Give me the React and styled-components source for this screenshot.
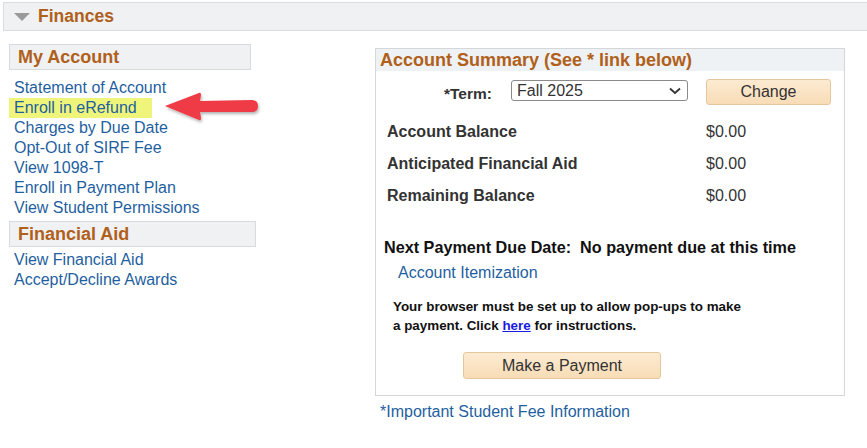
import React from "react";
import styled, { createGlobalStyle } from "styled-components";

const GlobalStyle = createGlobalStyle`
  body {
    margin: 0;
    background: #ffffff;
    font-family: "Liberation Sans", Arial, sans-serif;
  }
`;

const Page = styled.div`
  width: 867px;
  height: 448px;
  overflow: hidden;
  position: relative;
`;

const TopBar = styled.div`
  margin: 2px 0 0 3px;
  height: 27px;
  border: 1px solid #dadde0;
  border-right: none;
  background: #eff1f3;
  display: flex;
  align-items: center;
  gap: 8px;
  padding-left: 10px;
`;

const Triangle = styled.div`
  width: 0;
  height: 0;
  border-left: 8px solid transparent;
  border-right: 8px solid transparent;
  border-top: 8px solid #9a9a9a;
  margin-top: 1px;
`;

const BrownTitle = styled.span`
  color: #b0601a;
  font-weight: bold;
  font-size: ${(p) => p.size || 18}px;
`;

const Content = styled.div`
  display: flex;
  padding-left: 9px;
  margin-top: 13px;
`;

const LeftCol = styled.div`
  width: 247px;
  position: relative;
`;

const SectionHeader = styled.div`
  height: 26px;
  width: ${(p) => p.width}px;
  box-sizing: border-box;
  border: 1px solid #d8dbde;
  background: #eff1f3;
  display: flex;
  align-items: center;
  padding-left: 8px;
  margin-bottom: ${(p) => p.mb || 8}px;
`;

const LinkList = styled.div`
  display: flex;
  flex-direction: column;
  padding-left: 5px;
  margin-bottom: ${(p) => p.mb || 0}px;
`;

const NavLink = styled.a`
  font-size: 16px;
  line-height: 20px;
  color: #1f5f9f;
  text-decoration: none;
  width: max-content;
  background: ${(p) => (p.highlight ? "#eef57a" : "transparent")};
  margin-left: ${(p) => (p.highlight ? "-5px" : "0")};
  padding-left: ${(p) => (p.highlight ? "5px" : "0")};
  padding-right: ${(p) => (p.highlight ? "15px" : "0")};
`;

const Arrow = styled.svg`
  position: absolute;
  left: 154px;
  top: 46px;
`;

const RightCol = styled.div`
  margin-left: 119px;
  margin-top: 4px;
  width: 470px;
`;

const Panel = styled.div`
  border: 1px solid #d4d7da;
  height: 348px;
  box-sizing: border-box;
`;

const PanelHeader = styled.div`
  background: #eff2f4;
  height: 22px;
  display: flex;
  align-items: center;
  padding-left: 4px;
`;

const TermRow = styled.div`
  display: flex;
  align-items: center;
  margin-top: 7px;
  height: 27px;
`;

const TermLabel = styled.span`
  font-weight: bold;
  font-size: 15.5px;
  color: #333;
  margin-left: 68px;
  margin-top: 5px;
  width: 67px;
`;

const Select = styled.div`
  width: 177px;
  height: 21px;
  box-sizing: border-box;
  border: 1px solid #8a8a8a;
  border-radius: 3px;
  display: flex;
  align-items: center;
  justify-content: space-between;
  padding: 0 6px 0 5px;
  font-size: 16px;
  color: #333;
  margin-top: -2px;
`;

const Button = styled.div`
  width: ${(p) => p.width}px;
  height: ${(p) => p.height}px;
  box-sizing: border-box;
  border: 1px solid #e6c79c;
  border-radius: 3px;
  background: linear-gradient(#fcebd2, #f8dcb6);
  color: #333;
  font-size: 16px;
  display: flex;
  align-items: center;
  justify-content: center;
  margin-left: ${(p) => p.ml || 0}px;
`;

const BalanceTable = styled.div`
  display: grid;
  grid-template-columns: 319px auto;
  padding-left: 11px;
  margin-top: 16px;
`;

const BalanceLabel = styled.div`
  font-weight: bold;
  font-size: 16px;
  color: #333;
  height: 32px;
  line-height: 22px;
`;

const BalanceValue = styled.div`
  font-size: 16px;
  color: #333;
  height: 32px;
  line-height: 22px;
`;

const NextDue = styled.div`
  font-weight: bold;
  font-size: 16.2px;
  color: #111;
  padding-left: 8px;
  margin-top: 21px;
  white-space: pre;
`;

const ItemLink = styled.a`
  display: block;
  font-size: 16px;
  color: #1f5f9f;
  text-decoration: none;
  padding-left: 22px;
  margin-top: 7px;
`;

const Notice = styled.div`
  font-weight: bold;
  font-size: 13.4px;
  line-height: 19px;
  color: #111;
  padding-left: 17px;
  margin-top: 15px;
`;

const HereLink = styled.a`
  color: #1a1ae0;
  text-decoration: underline;
`;

const PayRow = styled.div`
  margin-top: 17px;
`;

const FeeLink = styled.a`
  display: block;
  font-size: 16px;
  color: #1f5f9f;
  text-decoration: none;
  padding-left: 5px;
  margin-top: 7px;
`;

const myAccountLinks = [
  "Statement of Account",
  "Enroll in eRefund",
  "Charges by Due Date",
  "Opt-Out of SIRF Fee",
  "View 1098-T",
  "Enroll in Payment Plan",
  "View Student Permissions",
];

const aidLinks = ["View Financial Aid", "Accept/Decline Awards"];

const balances = [
  ["Account Balance", "$0.00"],
  ["Anticipated Financial Aid", "$0.00"],
  ["Remaining Balance", "$0.00"],
];

const App = () => {
  return (
    <Page>
      <GlobalStyle />
      <TopBar>
        <Triangle />
        <BrownTitle size={17.5}>Finances</BrownTitle>
      </TopBar>
      <Content>
        <LeftCol>
          <SectionHeader width={242}>
            <BrownTitle>My Account</BrownTitle>
          </SectionHeader>
          <LinkList mb={3}>
            {myAccountLinks.map((l) => (
              <NavLink key={l} highlight={l === "Enroll in eRefund"}>
                {l}
              </NavLink>
            ))}
          </LinkList>
          <SectionHeader width={247} mb={3}>
            <BrownTitle>Financial Aid</BrownTitle>
          </SectionHeader>
          <LinkList>
            {aidLinks.map((l) => (
              <NavLink key={l}>{l}</NavLink>
            ))}
          </LinkList>
          <Arrow width="100" height="42" viewBox="0 0 100 42">
            <defs>
              <filter id="sh" x="-10%" y="-20%" width="130%" height="150%">
                <feDropShadow dx="1" dy="2" stdDeviation="1.5" floodColor="#000" floodOpacity="0.3" />
              </filter>
            </defs>
            <g filter="url(#sh)">
              <path
                d="M2 16 L36 3 Q38 2 38 5 L37 11 L89 10 Q95 10 95 16 Q95 22 89 22 L37 22 L38 28 Q38 31 36 30 Z"
                fill="#ee3b45"
              />
            </g>
          </Arrow>
        </LeftCol>
        <RightCol>
          <Panel>
            <PanelHeader>
              <BrownTitle>Account Summary (See * link below)</BrownTitle>
            </PanelHeader>
            <TermRow>
              <TermLabel>*Term:</TermLabel>
              <Select>
                <span>Fall 2025</span>
                <svg width="12" height="8" viewBox="0 0 12 8">
                  <path d="M1 1.5 L6 6 L11 1.5" fill="none" stroke="#333" strokeWidth="1.8" />
                </svg>
              </Select>
              <Button width={125} height={26} ml={18}>
                Change
              </Button>
            </TermRow>
            <BalanceTable>
              {balances.map(([label, value]) => (
                <React.Fragment key={label}>
                  <BalanceLabel>{label}</BalanceLabel>
                  <BalanceValue>{value}</BalanceValue>
                </React.Fragment>
              ))}
            </BalanceTable>
            <NextDue>{"Next Payment Due Date:  No payment due at this time"}</NextDue>
            <ItemLink>Account Itemization</ItemLink>
            <Notice>
              Your browser must be set up to allow pop-ups to make
              <br />a payment. Click <HereLink>here</HereLink> for instructions.
            </Notice>
            <PayRow>
              <Button width={198} height={27} ml={87}>
                Make a Payment
              </Button>
            </PayRow>
          </Panel>
          <FeeLink>*Important Student Fee Information</FeeLink>
        </RightCol>
      </Content>
    </Page>
  );
};

export default App;
